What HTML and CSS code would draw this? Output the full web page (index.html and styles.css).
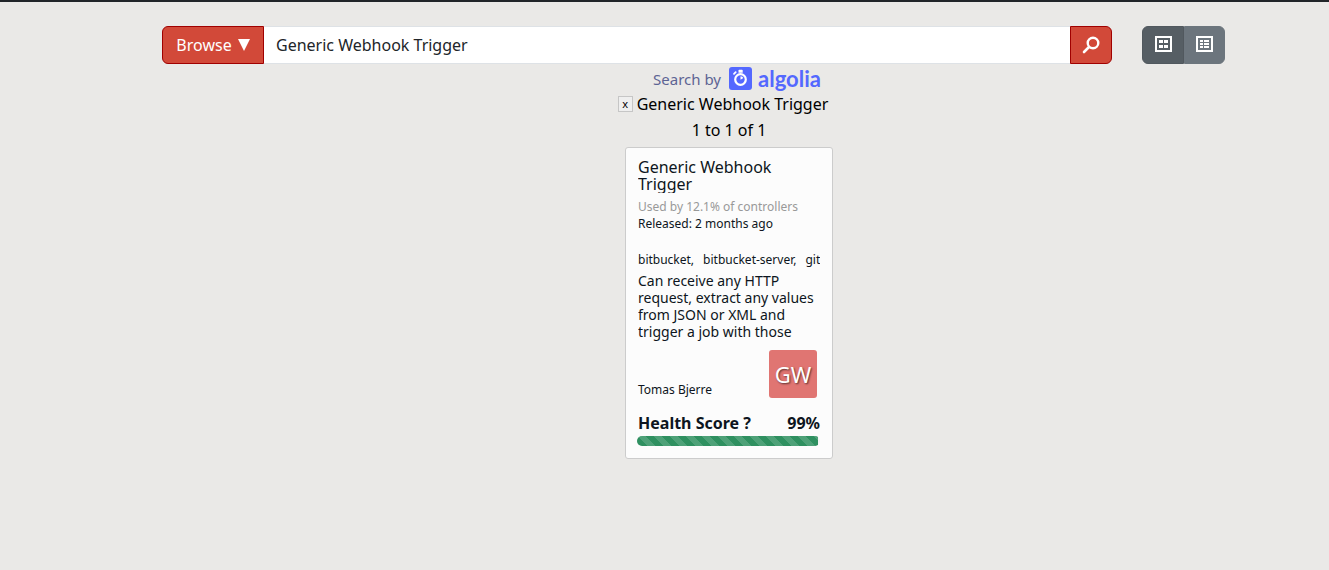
FILE: index.html
```html
<!DOCTYPE html>
<html lang="en">
<head>
    <meta charset="UTF-8">
    <meta name="viewport" content="width=device-width, initial-scale=1.0">
    <title>Plugins Index</title>
    <link rel="stylesheet" href="styles.css">
</head>
<body>
    <main class="page">
        <form class="search-bar">
            <div class="input-group">
                <button type="button" class="btn-browse">Browse
                    <svg class="caret" viewBox="0 0 12 12" aria-hidden="true"><path d="M0 0h12L6 12z"/></svg>
                </button>
                <input type="text" class="search-input" aria-label="Find plugins" value="Generic Webhook Trigger">
                <button type="submit" class="btn-search" aria-label="Search">
                    <svg viewBox="0 0 18 18" aria-hidden="true">
                        <circle cx="11" cy="7" r="5.300" fill="none" stroke="#fff" stroke-width="2.400"/>
                        <path d="M7 11L2 16" stroke="#fff" stroke-width="2.600" stroke-linecap="round"/>
                    </svg>
                </button>
            </div>
            <div class="view-group">
                <button type="button" class="btn-view active" aria-label="Tiles">
                    <svg viewBox="0 0 17 16" aria-hidden="true">
                        <path d="M1 1h15v14H1z" fill="none" stroke="#fff" stroke-width="2"/>
                        <path d="M4 4h4v3H4zM9 4h4v3H9zM4 9h4v3H4zM9 9h4v3H9z" fill="#fff"/>
                    </svg>
                </button>
                <button type="button" class="btn-view" aria-label="Table">
                    <svg viewBox="0 0 17 16" aria-hidden="true">
                        <path d="M1 1h15v14H1z" fill="none" stroke="#fff" stroke-width="2"/>
                        <path d="M4 4h3v2H4zM8 4h5v2H8zM4 7h3v2H4zM8 7h5v2H8zM4 10h3v2H4zM8 10h5v2H8z" fill="#fff"/>
                    </svg>
                </button>
            </div>
        </form>

        <section class="results">
            <a class="algolia" href="#">
                <span class="algolia-label">Search by</span>
                <svg class="algolia-mark" viewBox="0 0 23 23" aria-hidden="true">
                    <rect width="23" height="23" rx="3" fill="#5468ff"/>
                    <circle cx="11.500" cy="12.500" r="5.300" fill="none" stroke="#fff" stroke-width="2.200"/>
                    <path d="M9.500 3.500q0-.8.8-.8h2.600q.8 0 .8.800v2.200h-4.200z" fill="#fff"/>
                    <path d="M5 6.800l1.700-1.700" stroke="#fff" stroke-width="1.800" stroke-linecap="round"/>
                    <path d="M11.500 12.700V9.300a3.200 3.200 0 0 1 2.900 1.700z" fill="#fff"/>
                </svg>
                <span class="algolia-name">algolia</span>
            </a>
            <div class="active-filter">
                <button type="button" class="clear" aria-label="Clear search">x</button>
                <span>Generic Webhook Trigger</span>
            </div>
            <div class="count">1 to 1 of 1</div>

            <a class="card" href="#">
                <h4 class="title">Generic Webhook Trigger</h4>
                <div class="installs">Used by 12.1% of controllers</div>
                <div class="released">Released: 2 months ago</div>
                <div class="labels"><span>bitbucket,</span><span>bitbucket-server,</span><span>git</span></div>
                <p class="excerpt">Can receive any HTTP request, extract any values from JSON or XML and trigger a job with those</p>
                <div class="authors">
                    <span>Tomas Bjerre</span>
                    <span class="icon">GW</span>
                </div>
                <div class="score"><span>Health Score ?</span><span>99%</span></div>
                <div class="progress"><div class="progress-bar" style="width: 99%"></div></div>
            </a>
        </section>
    </main>
</body>
</html>
```

FILE: styles.css
```css
* {
    box-sizing: border-box;
}

body {
    margin: 0;
    min-height: 100vh;
    border-top: 2px solid #212529;
    background-color: #eae9e7;
    color: #000;
    font-family: "Segoe UI", "Noto Sans", "Open Sans", sans-serif;
    font-size: 16px;
    line-height: 24px;
}

a {
    color: inherit;
    text-decoration: none;
}

button, input {
    font: inherit;
}

.page {
    padding: 24px 104px 24px 162px;
}

/* search row */
.search-bar {
    display: flex;
    gap: 30px;
}

.input-group {
    display: flex;
    flex: 1;
}

.btn-browse, .btn-search {
    display: flex;
    align-items: center;
    justify-content: center;
    height: 38px;
    border: 1px solid #a00000;
    background-color: #d24939;
    color: #fff;
    cursor: pointer;
}

.btn-browse {
    gap: 6px;
    width: 102px;
    padding: 0;
    border-radius: 6px 0 0 6px;
}

.caret {
    width: 12px;
    height: 12px;
    fill: #fff;
}

.search-input {
    flex: 1;
    min-width: 0;
    height: 38px;
    padding: 6px 12px;
    border: 1px solid #dee2e6;
    border-width: 1px 0;
    border-radius: 0;
    background-color: #fff;
    color: #212529;
}

.btn-search {
    width: 42px;
    padding: 0;
    border-radius: 0 6px 6px 0;
}

.btn-search svg {
    width: 18px;
    height: 18px;
}

.view-group {
    display: flex;
}

.btn-view {
    display: flex;
    align-items: center;
    justify-content: center;
    width: 41px;
    height: 38px;
    padding: 0 0 2px;
    border: 1px solid #6c757d;
    border-radius: 0 6px 6px 0;
    background-color: #6c757d;
    cursor: pointer;
}

.btn-view.active {
    width: 42px;
    border-color: #51585e;
    border-radius: 6px 0 0 6px;
    background-color: #565e64;
}

.btn-view svg {
    width: 17px;
    height: 16px;
}

/* results */
.results {
    display: flex;
    flex-direction: column;
    align-items: center;
    padding: 2px 0 0 71px;
}

.algolia {
    display: flex;
    align-items: center;
    height: 25px;
    padding-left: 16px;
}

.algolia-label {
    margin-right: 8px;
    color: #5d6494;
    font-size: 15px;
}

.algolia-mark {
    width: 23px;
    height: 23px;
    margin-right: 6px;
}

.algolia-name {
    color: #5468ff;
    font-family: Lato, sans-serif;
    font-size: 22px;
    font-weight: bold;
}

.active-filter {
    display: flex;
    align-items: center;
    gap: 4px;
    height: 26px;
    padding-right: 12px;
}

.clear {
    width: 15px;
    height: 16px;
    padding: 0;
    border: 1px solid #c6c6c6;
    background-color: #efefef;
    font-size: 11px;
    line-height: 12px;
}

.count {
    line-height: 26px;
}

.card {
    width: 208px;
    margin-top: 4px;
    padding: 11px 12px 12px;
    border: 1px solid #ccc;
    border-radius: 3px;
    background-color: #fcfcfc;
    color: #0d1520;
}

.title {
    height: 34px;
    margin: 0 0 5px;
    overflow: hidden;
    font-size: 16px;
    font-weight: normal;
    line-height: 17px;
}

.installs, .released {
    font-size: 12px;
    line-height: 17px;
}

.installs {
    color: #999;
}

.labels {
    display: flex;
    gap: 9px;
    height: 18px;
    margin-top: 19px;
    overflow: hidden;
    font-size: 12px;
    line-height: 18px;
    white-space: nowrap;
}

.excerpt {
    height: 70px;
    margin: 3px 0 8px;
    overflow: hidden;
    font-size: 14px;
    line-height: 17px;
}

.authors {
    display: flex;
    align-items: flex-end;
    justify-content: space-between;
    padding-right: 3px;
    font-size: 12px;
    line-height: 16px;
}

.icon {
    width: 48px;
    height: 48px;
    border-radius: 3px;
    background-color: #e07572;
    color: #fff;
    font-size: 22px;
    line-height: 48px;
    text-align: center;
    text-shadow: 1px 1px 2px rgba(0, 0, 0, .6);
}

.score {
    display: flex;
    justify-content: space-between;
    margin-top: 13px;
    font-weight: bold;
}

.progress {
    height: 10px;
    margin: 1px 0 0 -1px;
    overflow: hidden;
    border-radius: 5px;
    background-color: #f5f5f5;
}

.progress-bar {
    height: 10px;
    background-color: #2f9060;
    background-image: linear-gradient(45deg, rgba(255, 255, 255, .15) 25%, transparent 25%, transparent 50%, rgba(255, 255, 255, .15) 50%, rgba(255, 255, 255, .15) 75%, transparent 75%, transparent);
    background-size: 16px 16px;
}
```
